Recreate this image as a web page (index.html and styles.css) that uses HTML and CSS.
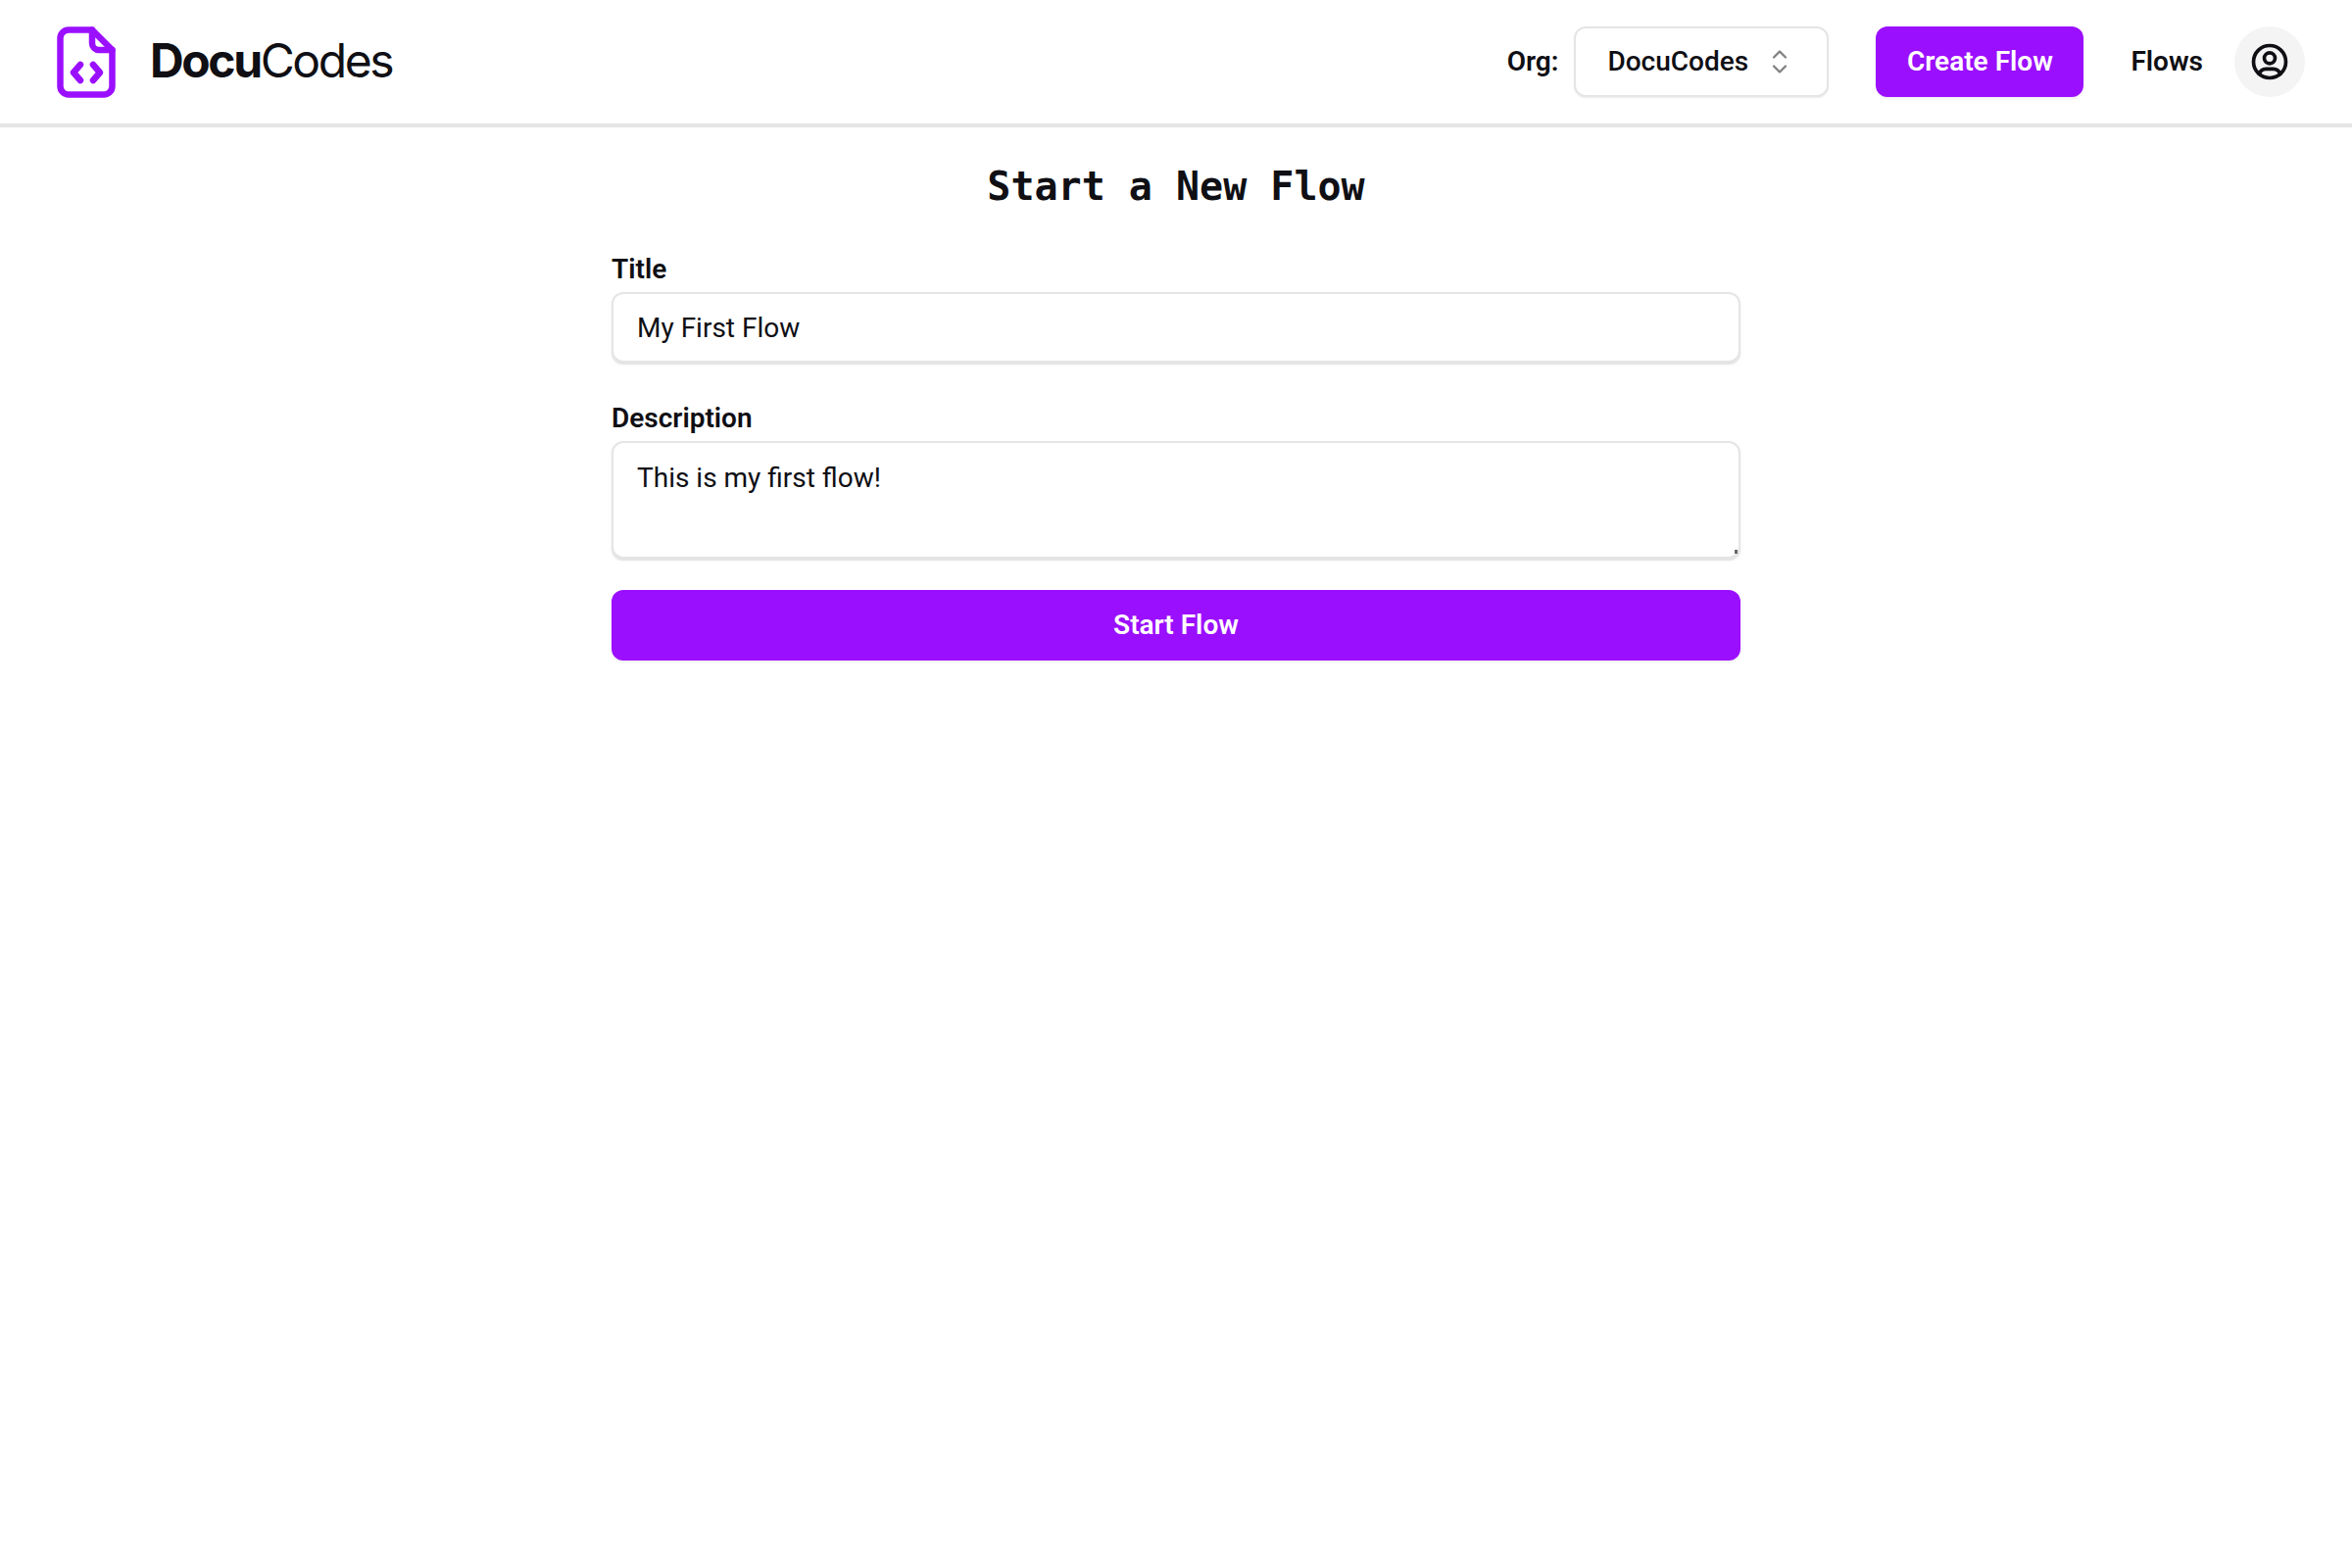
FILE: index.html
```html
<!DOCTYPE html>
<html lang="en">
<head>
  <meta charset="UTF-8" />
  <meta name="viewport" content="width=device-width, initial-scale=1.0" />
  <title>Start a New Flow</title>
  <link rel="stylesheet" href="styles.css">
</head>
<body>
  <header class="navbar">
    <a class="brand" href="#">
      <svg class="brand-icon" viewBox="0 0 60 73" fill="none" stroke="#9b0fff" stroke-width="6.5" stroke-linecap="round" stroke-linejoin="round">
        <path d="M36 3.5H12a8.5 8.5 0 0 0-8.500 8.500v49a8.500 8.500 0 0 0 8.500 8.500h36a8.500 8.500 0 0 0 8.500-8.500V24z" />
        <path d="M36 3.500V17a7 7 0 0 0 7 7h13.500" />
        <path d="M24 39l-7 8 7 8" />
        <path d="M37 39l7 8-7 8" />
      </svg>
      <span class="brand-name"><b>Docu</b>Codes</span>
    </a>

    <div class="nav-right">
      <div class="org">
        <label class="org-label">Org:</label>
        <button class="org-select">
          <span class="org-name">DocuCodes</span>
          <svg class="selector-icon" viewBox="0 0 24 24" fill="none" stroke="#808080" stroke-width="1.500" stroke-linecap="round" stroke-linejoin="round">
            <path d="M8 9l4-4 4 4" />
            <path d="M16 15l-4 4-4-4" />
          </svg>
        </button>
      </div>
      <button class="btn-create">Create Flow</button>
      <a class="nav-link" href="#">Flows</a>
      <button class="avatar">
        <svg class="avatar-icon" viewBox="0 0 24 24" fill="none" stroke="#0f0f14" stroke-width="2" stroke-linecap="round" stroke-linejoin="round">
          <circle cx="12" cy="12" r="9" />
          <circle cx="12" cy="10" r="3" />
          <path d="M6.168 18.849A4 4 0 0 1 10 16h4a4 4 0 0 1 3.824 2.860" />
        </svg>
      </button>
    </div>
  </header>

  <main class="content">
    <h1>Start a New Flow</h1>
    <form class="flow-form">
      <div class="field">
        <label for="title">Title</label>
        <input type="text" id="title" value="My First Flow" />
      </div>
      <div class="field">
        <label for="description">Description</label>
        <textarea id="description">This is my first flow!</textarea>
      </div>
      <button type="button" class="btn-start">Start Flow</button>
    </form>
  </main>
</body>
</html>
```

FILE: styles.css
```css
* {
  box-sizing: border-box;
  margin: 0;
  padding: 0;
}

body {
  font-family: 'Roboto', sans-serif;
  background: #fff;
  color: #0f0f14;
  min-height: 100vh;
}

.navbar {
  display: flex;
  justify-content: space-between;
  align-items: center;
  height: 130px;
  padding: 0 48px 0 58px;
  border-bottom: 4px solid #e5e5e5;
}

.brand {
  display: flex;
  align-items: center;
  gap: 35px;
  color: inherit;
  text-decoration: none;
}

.brand-icon {
  width: 60px;
  height: 73px;
}

.brand-name {
  padding-bottom: 3px;
  font-family: 'Inter', sans-serif;
  font-size: 48px;
  letter-spacing: -2.400px;
}

.brand-name b {
  font-weight: 700;
}

.nav-right {
  display: flex;
  align-items: center;
}

.org {
  display: flex;
  align-items: center;
  gap: 16px;
  margin-right: 48px;
}

.org-label,
.nav-link {
  padding-bottom: 2px;
  font-size: 28px;
  font-weight: 600;
}

.org-select {
  display: flex;
  align-items: center;
  justify-content: space-between;
  width: 260px;
  height: 72px;
  padding: 0 30px 0 32px;
  font: 500 28px 'Roboto', sans-serif;
  color: inherit;
  background: #fff;
  border: 2px solid #e5e5e5;
  border-radius: 12px;
  box-shadow: 0 1px 2px rgba(0, 0, 0, 0.08);
}

.org-name {
  padding-bottom: 2px;
}

.selector-icon {
  width: 36px;
  height: 36px;
}

.btn-create {
  width: 212px;
  height: 72px;
  margin-right: 48px;
  padding-bottom: 2px;
  font: 600 28px 'Roboto', sans-serif;
  color: #fff;
  background: #9b0fff;
  border: none;
  border-radius: 12px;
  box-shadow: 0 2px 3px rgba(0, 0, 0, 0.06);
}

.nav-link {
  margin-right: 32px;
  color: inherit;
  text-decoration: none;
}

.avatar {
  display: flex;
  align-items: center;
  justify-content: center;
  width: 72px;
  height: 72px;
  background: #f4f4f4;
  border: none;
  border-radius: 50%;
}

.avatar-icon {
  width: 44px;
  height: 44px;
}

.content {
  width: 1152px;
  margin: 0 auto;
  padding-top: 36px;
}

h1 {
  font-family: 'DejaVu Sans Mono', monospace;
  font-size: 40px;
  font-weight: 700;
  line-height: 48px;
  text-align: center;
  margin-bottom: 44px;
}

.flow-form {
  display: flex;
  flex-direction: column;
  gap: 32px;
}

.field:first-child {
  margin-bottom: 8px;
}

.field label {
  display: block;
  font-size: 28px;
  font-weight: 600;
  line-height: 34px;
  margin-bottom: 6px;
}

.field input,
.field textarea {
  display: block;
  width: 100%;
  padding: 0 24px;
  font: 400 28px 'Roboto', sans-serif;
  color: inherit;
  background: #fff;
  border: 2px solid #e5e5e5;
  border-radius: 12px;
  box-shadow: 0 2px 0 #e5e5e5, 0 2px 4px rgba(0, 0, 0, 0.06);
  outline: none;
}

.field input {
  height: 72px;
}

.field textarea {
  height: 120px;
  padding-top: 18px;
  padding-bottom: 16px;
  line-height: 36px;
}

.field textarea::-webkit-resizer {
  background: linear-gradient(#666, #666) no-repeat right 1px bottom 3px / 3px 4px;
}

.btn-start {
  height: 72px;
  padding-bottom: 2px;
  font: 600 28px 'Roboto', sans-serif;
  color: #fff;
  background: #9b0fff;
  border: none;
  border-radius: 12px;
  box-shadow: 0 2px 3px rgba(0, 0, 0, 0.06);
}
```
